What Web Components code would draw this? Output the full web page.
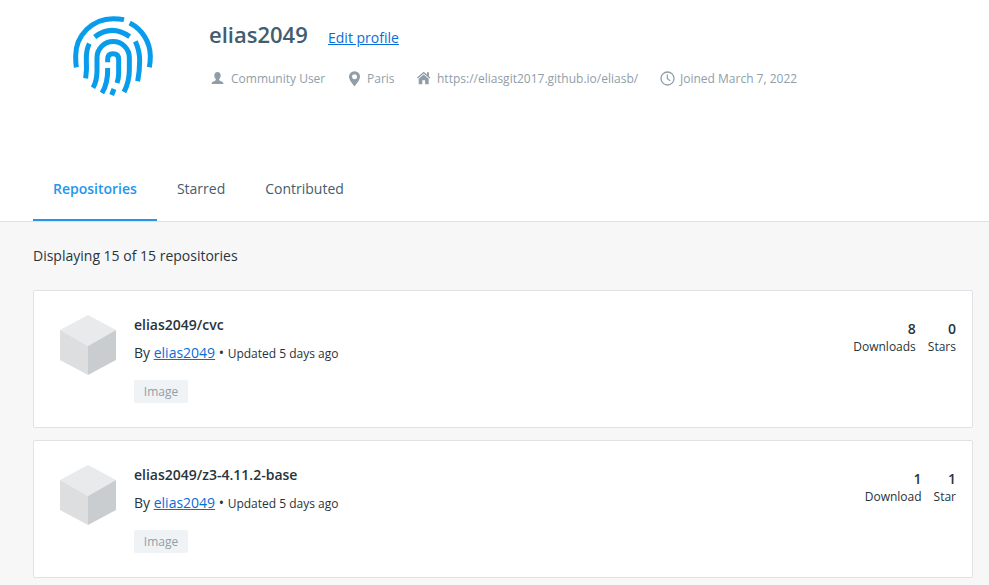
<!DOCTYPE html>
<html lang="en">
<head>
<meta charset="utf-8">
<title>elias2049</title>
<style>
html, body { margin: 0; background: #f7f7f8; }
body { font-family: "Open Sans", sans-serif; font-size: 14px; color: #27343b; height: 585px; overflow: hidden; }
</style>
</head>
<body>
<profile-page></profile-page>
<script>
const define = (name, html, setup) => customElements.define(name, class extends HTMLElement {
  connectedCallback() {
    if (this.shadowRoot) return;
    const t = document.createElement('template');
    t.innerHTML = html;
    this.attachShadow({ mode: 'open' }).append(t.content.cloneNode(true));
    if (setup) setup(this, this.shadowRoot);
  }
});

define('finger-avatar', `
<style>:host{display:block;width:100px;height:100px}svg{display:block}</style>
<svg width="100" height="100" viewBox="0 0 300 300" fill="none" stroke="#089cec" stroke-width="15">
  <path d="M40 187Q38 175 38 153A112 112 0 0 1 150 41Q167 41 183 44M200 54A112 112 0 0 1 262 153Q262 172 259 187"/>
  <path d="M95 96Q146 57 200 95"/>
  <path d="M79 116Q69 135 70 165Q72 194 68 220M217 109Q230 137 230 165Q230 200 224 229"/>
  <path d="M90 248Q102 228 102 197V158A48.500 48.500 0 0 1 199 158V195Q199 230 183 261"/>
  <path d="M134 172V163Q134 146 150 146Q167 146 167 163V205Q167 220 162 234M134 189Q135 235 117 264M153 252L146 270"/>
</svg>`);

const icons = {
  user: '<svg style="margin-bottom:2px" width="13" height="14" viewBox="0 0 13 14"><path fill="#8f9ea8" d="M6.500 1C4.500 1 3.300 2.300 3.300 4.200c0 1.700.6 3.100 1.600 4C4.900 9 4.500 9.500 3.500 10L1.400 11Q.6 11.500.6 13h11.800Q12.400 11.500 11.600 11L9.500 10C8.500 9.500 8.100 9 8.100 8.200c1-.9 1.600-2.300 1.600-4C9.700 2.300 8.500 1 6.500 1Z"/></svg>',
  pin: '<svg width="12" height="16" viewBox="0.5 0 12 16"><path fill="#8f9ea8" fill-rule="evenodd" d="M6 .2A5.400 5.400 0 0 0 .5 5.700C.5 9 4.400 13 6 15.600C7.600 13 11.500 9 11.500 5.700A5.400 5.400 0 0 0 6 .2ZM6 3.200A2.500 2.500 0 1 1 6 8.200A2.500 2.500 0 0 1 6 3.200Z"/></svg>',
  home: '<svg style="margin-bottom:2px" width="14" height="14" viewBox="0.3 0 14 14"><path fill="#8f9ea8" d="M7 .7.3 6.500l.8 1L7 2.400l5.900 5.100.8-1-1.500-1.300V1.300h-1.900v2.300ZM2 7.700V13.200h3.600V9.300h2.800v3.900H12V7.700L7 3.400Z"/></svg>',
  clock: '<svg style="margin-bottom:1px" width="15" height="15" viewBox="0 0 15 15" fill="none" stroke="#8f9ea8"><circle cx="7.500" cy="7.500" r="6.500" stroke-width="1.300"/><path stroke-width="1.200" d="M7.300 3.500v4.200l2.900 2.100"/></svg>'
};
define('meta-item', `
<style>
:host{display:flex;align-items:center;font-size:12px;line-height:18px;color:#8f9ea8;white-space:nowrap;height:18px}
.i{display:flex;flex:none;margin-right:var(--gap,6px)}svg{display:block}
</style><span class="i"></span><span><slot></slot></span>`,
(el, r) => r.querySelector('.i').innerHTML = icons[el.getAttribute('icon')]);

define('profile-header', `
<style>
:host{display:flex;padding:5px 0 0 63px;height:157px;box-sizing:border-box}
.info{padding:12px 0 0 46px}
.top{display:flex;align-items:baseline;height:34px;line-height:34px}
h1{margin:0;font-size:22px;font-weight:600;line-height:34px;color:#445d6e;width:119px}
a{color:#086dd7;font-size:14px;text-decoration:underline}
.meta{display:flex;padding:19px 0 0 2px}
</style>
<finger-avatar></finger-avatar>
<div class="info">
  <div class="top"><h1>elias2049</h1><a>Edit profile</a></div>
  <div class="meta">
    <meta-item icon="user" style="--gap:7px;width:138px">Community User</meta-item>
    <meta-item icon="pin" style="width:68px">Paris</meta-item>
    <meta-item icon="home" style="width:243px">https://eliasgit2017.github.io/eliasb/</meta-item>
    <meta-item icon="clock" style="--gap:5px">Joined March 7, 2022</meta-item>
  </div>
</div>`);

define('nav-tab', `
<style>
:host{display:flex;box-sizing:border-box;height:64px;padding:0 20px;line-height:64px;color:#445d6e;border-bottom:2px solid transparent}
:host([active]){color:#2496ed;font-weight:600;border-color:#2496ed}
</style><slot></slot>`);
define('nav-tabs', `
<style>:host{display:flex;padding-left:33px;height:64px;border-bottom:1px solid #e1e2e6}</style><slot></slot>`);

define('stat-count', `
<style>
:host{display:block;text-align:right;font-size:12px;line-height:17px}
b{display:block;font-size:14px;font-weight:600;line-height:18px}
</style><b></b><slot></slot>`,
(el, r) => r.querySelector('b').textContent = el.getAttribute('value'));

define('cube-logo', `
<style>:host{display:block;width:56px;height:60px}svg{display:block}</style>
<svg width="56" height="60" viewBox="0 0 56 60"><path fill="#e8eaec" d="M28 0 56 15 28 31 0 15Z"/><path fill="#dcdee0" d="M0 15 28 31V60L0 45Z"/><path fill="#c9cdd0" d="M56 15 28 31V60L56 45Z"/></svg>`);

define('repo-card', `
<style>
:host{display:flex;box-sizing:border-box;height:138px;background:#fff;border:1px solid #e1e2e6;border-radius:2px;padding:24px 16px 0 26px}
.body{flex:1;padding-left:18px}
h2{margin:0;font-size:14px;font-weight:600;line-height:20px}
.by{line-height:20px;margin-top:8px;white-space:nowrap}
a{color:#086dd7;text-decoration:underline}
small{font-size:12px}
.tag{display:block;width:54px;height:23px;box-sizing:border-box;margin-top:16px;background:#eff3f6;color:#8f9ea8;font-size:12px;line-height:23px;text-align:center;border-radius:2px}
.stats{display:flex;gap:12px;padding-top:5px}
</style>
<cube-logo></cube-logo>
<div class="body"><h2></h2><div class="by">By <a>elias2049</a> • <small>Updated 5 days ago</small></div><span class="tag">Image</span></div>
<div class="stats"><slot></slot></div>`,
(el, r) => r.querySelector('h2').textContent = el.getAttribute('name'));

define('profile-page', `
<style>
:host{display:block}
.head{background:#fff}
.list{padding:24px 16px 0 33px;display:flex;flex-direction:column}
.count{line-height:20px;margin-bottom:24px}
repo-card{margin-bottom:12px}
</style>
<div class="head"><profile-header></profile-header>
<nav-tabs><nav-tab active>Repositories</nav-tab><nav-tab>Starred</nav-tab><nav-tab>Contributed</nav-tab></nav-tabs></div>
<div class="list">
  <div class="count">Displaying 15 of 15 repositories</div>
  <repo-card name="elias2049/cvc"><stat-count value="8">Downloads</stat-count><stat-count value="0">Stars</stat-count></repo-card>
  <repo-card name="elias2049/z3-4.11.2-base"><stat-count value="1">Download</stat-count><stat-count value="1">Star</stat-count></repo-card>
</div>`);
</script>
</body>
</html>
